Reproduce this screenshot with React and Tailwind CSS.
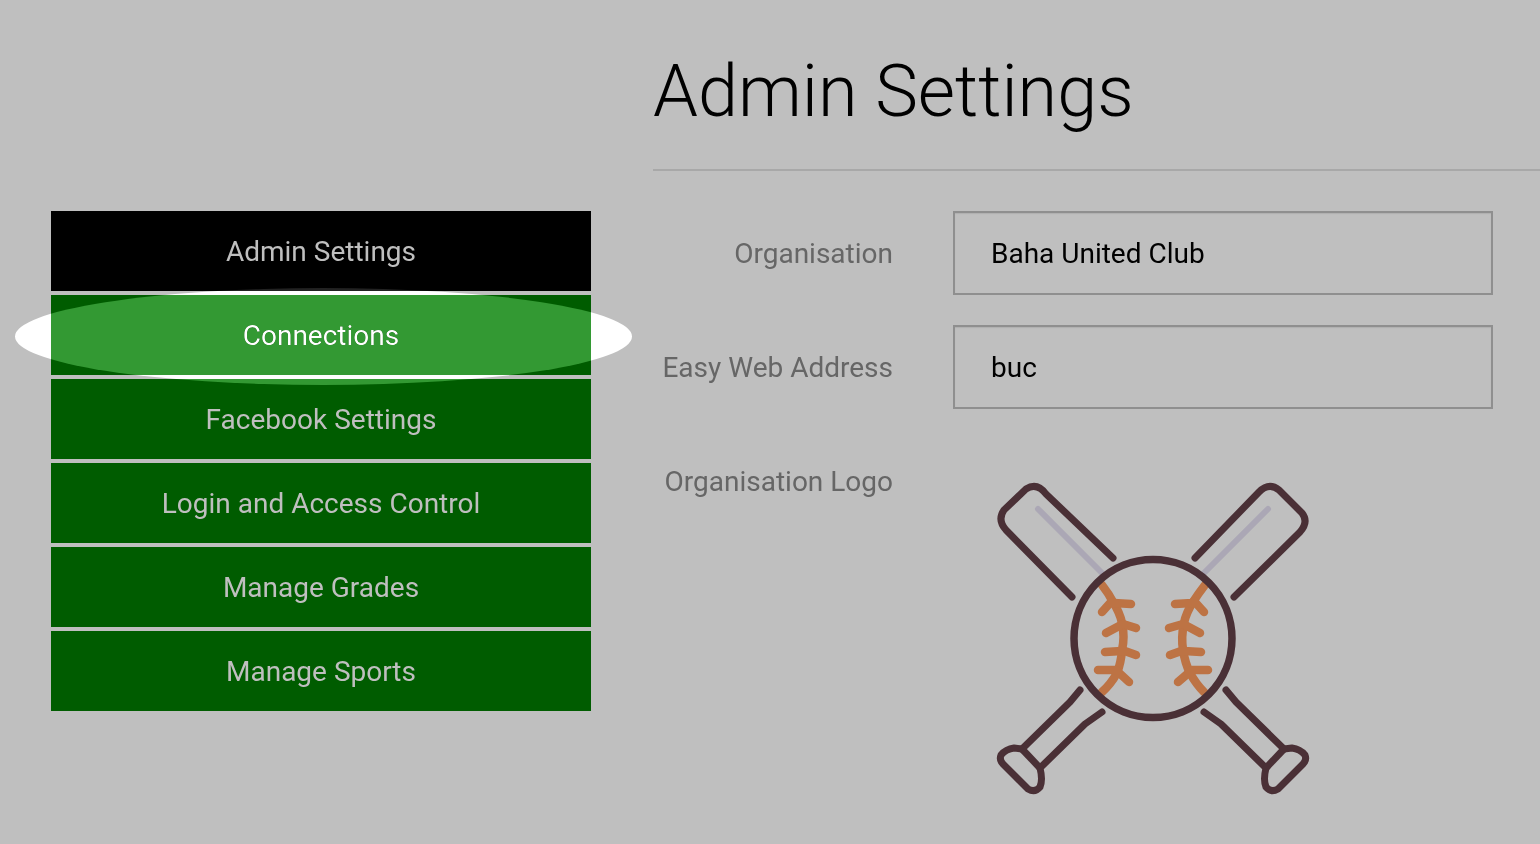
const menu = [
  "Facebook Settings",
  "Login and Access Control",
  "Manage Grades",
  "Manage Sports",
];

const Logo = () => (
  <svg width="350" height="340" viewBox="0 0 350 340" fill="none" strokeLinecap="round" strokeLinejoin="round" className="block">
    <g stroke="#aba7b5" strokeWidth="6">
      <path d="M58 39 L122 103" />
      <path d="M288 39 L224 103" />
    </g>
    <g stroke="#4a3036" strokeWidth="7">
      <path d="M133 88 L66 24 Q57 12 46 19 L24 40 Q17 50 26 60 L92 127" />
      <path d="M215 88 L279 22 Q289 12 299 20 L322 43 Q329 52 320 62 L254 127" />
      <path d="M100 220 L90 232 L42 279 L34 278 Q26 279 21 285 Q19 290 23 294 L48 319 Q55 323 60 317 Q63 310 60 298 L105 254 L122 242" />
      <path d="M246 220 L256 232 L304 279 L312 278 Q320 279 325 285 Q327 290 323 294 L298 319 Q291 323 286 317 Q283 310 286 298 L241 254 L224 242" />
      <path d="M42 279 L60 298" />
      <path d="M304 279 L286 298" />
    </g>
    <g stroke="#bd7344" strokeWidth="8.5">
      <path d="M122 115 Q129 124 133 132 Q140 143 142 153 Q145 167 142 180 Q141 193 137 203 Q131 214 122 222" />
      <path d="M134 133 L151 134 M131 132 L122 142" />
      <path d="M143 154 L156 158 M141 155 L126 163" />
      <path d="M142 181 L125 182 M142 180 L156 185" />
      <path d="M136 200 L118 200 M136 200 L149 212" />
      <path d="M225 115 Q218 124 213 132 Q206 143 204 153 Q201 167 203 180 Q205 193 210 203 Q216 214 224 222" />
      <path d="M212 133 L195 134 M214 131 L224 142" />
      <path d="M203 154 L189 158 M205 155 L220 163" />
      <path d="M204 181 L221 182 M204 180 L190 185" />
      <path d="M212 200 L228 200 M212 200 L198 212" />
    </g>
    <circle cx="173" cy="168.5" r="79" stroke="#4a3036" strokeWidth="7.5" />
  </svg>
);

export default function App() {
  return (
    <div className="relative h-[844px] overflow-hidden bg-[#bfbfbf] font-['Roboto',sans-serif] text-[28px]">
      {/* white part of the spotlight, sits under the buttons */}
      <div className="absolute left-[15px] top-[288px] h-[97px] w-[617px] rounded-[50%] bg-white" />

      <div className="relative flex">
        <div className="ml-[51px] mt-[211px] flex w-[540px] flex-col gap-1 text-center">
          <div className="relative z-20 flex h-20 items-center justify-center overflow-hidden bg-black pt-0.5 text-[#bfbfbf]">
            <div className="absolute left-[-36px] top-[77px] h-[97px] w-[617px] rounded-[50%] bg-[#222222]" />
            <span className="relative">Admin Settings</span>
          </div>
          <div className="flex h-20 items-center justify-center bg-[#005c00] pt-0.5 text-white">Connections</div>
          {menu.map((item) => (
            <div key={item} className="flex h-20 items-center justify-center bg-[#005c00] pt-0.5 text-[#bfbfbf]">
              {item}
            </div>
          ))}
        </div>

        <div className="ml-[62px] flex-1">
          <h1 className="h-[171px] border-b-2 border-[#a8a8a8] pt-[47px] text-[72px] leading-[90px] font-light text-black">
            Admin Settings
          </h1>
          <div className="mt-10 flex flex-col">
            <div className="flex h-[84px] items-center">
              <label className="w-[240px] pt-0.5 text-right text-[#666666]">Organisation</label>
              <div className="ml-[60px] flex h-[84px] w-[540px] items-center border-2 border-[#8f8f8f] pt-0.5 pl-[36px] text-black shadow-[inset_0_1px_1px_rgba(0,0,0,0.08)]">
                Baha United Club
              </div>
            </div>
            <div className="mt-[30px] flex h-[84px] items-center">
              <label className="w-[240px] pt-0.5 text-right text-[#666666]">Easy Web Address</label>
              <div className="ml-[60px] flex h-[84px] w-[540px] items-center border-2 border-[#8f8f8f] pt-0.5 pl-[36px] text-black shadow-[inset_0_1px_1px_rgba(0,0,0,0.08)]">
                buc
              </div>
            </div>
            <div className="mt-[30px] flex">
              <label className="mt-[22px] w-[240px] text-right text-[#666666]">Organisation Logo</label>
              <div className="ml-[87px] mt-[31px]">
                <Logo />
              </div>
            </div>
          </div>
        </div>
      </div>

      {/* bright part of the spotlight, lifts the dimmed greens */}
      <div className="pointer-events-none absolute left-[15px] top-[288px] z-10 h-[97px] w-[617px] rounded-[50%] bg-[#339933] mix-blend-lighten" />
    </div>
  );
}
